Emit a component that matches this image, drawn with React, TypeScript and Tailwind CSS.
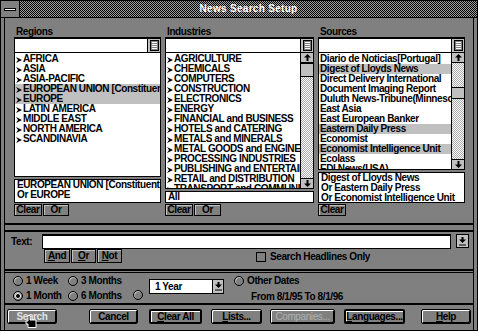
import React from "react";

const FONT = "font-['Liberation_Sans',Arial,sans-serif]";

const Bullet = () => (
  <svg width="6" height="6" viewBox="0 0 6 6" className="shrink-0 mr-[1px] mt-[3px]">
    <path d="M0 0 L6 3 L0 6 L2 3 Z" fill="#000" />
  </svg>
);

const ListIcon = () => (
  <div className="w-[13px] h-full bg-[#c0c0c0] border-l border-black flex items-center justify-center">
    <svg width="9" height="11" viewBox="0 0 9 11">
      <rect x="0.5" y="0.5" width="8" height="10" fill="#808080" stroke="#000" />
      <path d="M2 2.5 H7 M2 4.5 H7 M2 6.5 H7 M2 8.5 H7" stroke="#fff" strokeWidth="1" />
    </svg>
  </div>
);

const ArrowBtn = ({ dir }: { dir: "up" | "down" }) => (
  <div
    className={
      "h-[10px] shrink-0 bg-[#c0c0c0] border-black flex items-center justify-center " +
      (dir === "up" ? "border-b" : "border-t")
    }
  >
    <svg width="7" height="7" viewBox="0 0 7 7">
      {dir === "up" ? (
        <path d="M3.5 0 L7 3.5 H4.5 V7 H2.5 V3.5 H0 Z" fill="#000" />
      ) : (
        <path d="M3.5 7 L7 3.5 H4.5 V0 H2.5 V3.5 H0 Z" fill="#000" />
      )}
    </svg>
  </div>
);

const DITHER = "bg-[repeating-conic-gradient(#a8a8a8_0_25%,#ffffff_0_50%)] bg-[length:2px_2px]";

const Scrollbar = ({ before, thumb }: { before: number; thumb: number }) => (
  <div className="w-[13px] border-l border-black flex flex-col bg-white shrink-0">
    <ArrowBtn dir="up" />
    <div style={{ height: before }} className={"shrink-0 " + DITHER} />
    <div style={{ height: thumb }} className="shrink-0 bg-[#c0c0c0] border-y border-black" />
    <div className={"flex-1 " + DITHER} />
    <ArrowBtn dir="down" />
  </div>
);

type Item = { t: string; hl?: boolean };

const ListBox = ({
  items,
  bullets,
  scroll,
}: {
  items: Item[];
  bullets?: boolean;
  scroll?: { before: number; thumb: number };
}) => (
  <div className="flex-1 flex border border-t-0 border-black bg-white min-h-0 overflow-hidden">
    <div className="flex-1 min-w-0 overflow-hidden pt-[1px]">
      {items.map((it, i) => (
        <div
          key={i}
          className={
            "h-[10px] flex items-start whitespace-nowrap leading-[10px] pl-[1px] " +
            (it.hl ? "bg-[#c0c0c0]" : "")
          }
        >
          {bullets && <Bullet />}
          <span>{it.t}</span>
        </div>
      ))}
    </div>
    {scroll && <Scrollbar before={scroll.before} thumb={scroll.thumb} />}
  </div>
);

const SmallBtn = ({ label, w }: { label: string; w: number }) => (
  <div
    style={{ width: w }}
    className="h-[12px] border border-black bg-[#808080] shadow-[inset_1px_1px_0_#c0c0c0] flex items-center justify-center leading-[10px]"
  >
    {label}
  </div>
);

const Column = ({
  label,
  width,
  items,
  bullets,
  scroll,
  sel,
  selH,
  buttons,
}: {
  label: string;
  width: number;
  items: Item[];
  bullets?: boolean;
  scroll?: { before: number; thumb: number };
  sel: string[];
  selH: number;
  buttons: { label: string; w: number }[];
}) => (
  <div style={{ width }} className="flex flex-col h-full">
    <div className="h-[10px] leading-[10px] pl-[2px]">{label}</div>
    <div className="h-[16px] shrink-0 border border-black border-t-2 bg-white flex justify-end">
      <ListIcon />
    </div>
    <ListBox items={items} bullets={bullets} scroll={scroll} />
    <div style={{ height: selH }} className="shrink-0 mt-[2px] border border-black bg-white pl-[2px] overflow-hidden">
      {sel.map((s, i) => (
        <div key={i} className="h-[10px] leading-[10px] whitespace-nowrap">
          {s}
        </div>
      ))}
    </div>
    <div className="mt-[1px] flex gap-[1px] shrink-0">
      {buttons.map((b) => (
        <SmallBtn key={b.label} label={b.label} w={b.w} />
      ))}
    </div>
  </div>
);

const Radio = ({ on }: { on?: boolean }) => (
  <div className="w-[10px] h-[10px] rounded-full border border-black bg-[#808080] shadow-[inset_1px_1px_0_#c0c0c0] flex items-center justify-center shrink-0">
    {on && <div className="w-[6px] h-[6px] rounded-full bg-black border border-white" />}
  </div>
);

const DownGlyph = () => (
  <svg width="7" height="9" viewBox="0 0 7 9">
    <path d="M3.5 6 L7 2.5 H4.5 V0 H2.5 V2.5 H0 Z" fill="#000" />
    <path d="M0 8 H7" stroke="#000" />
  </svg>
);

const BigBtn = ({
  w,
  children,
  ml,
  thick,
}: {
  w: number;
  children: React.ReactNode;
  ml: number;
  thick?: boolean;
}) => (
  <div
    style={{ width: w, marginLeft: ml }}
    className={
      "h-[15px] shrink-0 rounded-[2px] border-black bg-[#808080] flex items-center justify-center leading-[10px] " +
      (thick
        ? "border-2 shadow-[inset_1px_1px_0_#ffffff]"
        : "border shadow-[inset_1px_1px_0_#ffffff,inset_-1px_-1px_0_#000]")
    }
  >
    {children}
  </div>
);

export default function App() {
  const regions: Item[] = [
    { t: "AFRICA" },
    { t: "ASIA" },
    { t: "ASIA-PACIFIC" },
    { t: "EUROPEAN UNION [Constituents]", hl: true },
    { t: "EUROPE", hl: true },
    { t: "LATIN AMERICA" },
    { t: "MIDDLE EAST" },
    { t: "NORTH AMERICA" },
    { t: "SCANDINAVIA" },
  ];
  const industries: Item[] = [
    { t: "AGRICULTURE" },
    { t: "CHEMICALS" },
    { t: "COMPUTERS" },
    { t: "CONSTRUCTION" },
    { t: "ELECTRONICS" },
    { t: "ENERGY" },
    { t: "FINANCIAL and BUSINESS" },
    { t: "HOTELS and CATERING" },
    { t: "METALS and MINERALS" },
    { t: "METAL GOODS and ENGINEERING" },
    { t: "PROCESSING INDUSTRIES" },
    { t: "PUBLISHING and ENTERTAINMENT" },
    { t: "RETAIL and DISTRIBUTION" },
    { t: "TRANSPORT and COMMUNICATIONS" },
  ];
  const sources: Item[] = [
    { t: "Diario de Noticias[Portugal]" },
    { t: "Digest of Lloyds News", hl: true },
    { t: "Direct Delivery International" },
    { t: "Document Imaging Report" },
    { t: "Duluth News-Tribune(Minnesota)" },
    { t: "East Asia" },
    { t: "East European Banker" },
    { t: "Eastern Daily Press", hl: true },
    { t: "Economist" },
    { t: "Economist Intelligence Unit", hl: true },
    { t: "Ecolass" },
    { t: "EDI News(USA)" },
  ];

  return (
    <div
      className={
        "w-[478px] h-[331px] bg-[#808080] border border-black flex flex-col overflow-hidden text-black text-[10px] tracking-[-0.4px] font-bold " +
        FONT
      }
    >
      {/* Title bar */}
      <div className="h-[17px] flex border-b border-black shrink-0">
        <div className="w-[19px] border-r border-black bg-[#808080] flex items-center justify-center">
          <div className="w-[12px] h-[3px] bg-white border border-black" />
        </div>
        <div className="flex-1 bg-[repeating-conic-gradient(#000_0_25%,#a0a0a0_0_50%)] bg-[length:2px_2px] flex items-center justify-center">
          <span className="text-white leading-[10px] tracking-[0.3px]">News Search Setup</span>
        </div>
      </div>

      {/* Body with inner frame */}
      <div className="flex-1 flex flex-col border-x-[3px] border-[#808080]">
        <div className="flex-1 flex flex-col border-x border-black">
          {/* Lists section */}
          <div className="h-[207px] shrink-0 flex gap-[4px] pl-[9px] pt-[9px] pb-[7px] border-b-2 border-black">
            <Column
              label="Regions"
              width={147}
              items={regions}
              bullets
              sel={["EUROPEAN UNION [Constituents]", "Or EUROPE"]}
              selH={24}
              buttons={[
                { label: "Clear", w: 28 },
                { label: "Or", w: 26 },
              ]}
            />
            <Column
              label="Industries"
              width={149}
              items={industries}
              bullets
              scroll={{ before: 0, thumb: 14 }}
              sel={["All"]}
              selH={12}
              buttons={[
                { label: "Clear", w: 28 },
                { label: "Or", w: 27 },
              ]}
            />
            <Column
              label="Sources"
              width={147}
              items={sources}
              scroll={{ before: 24, thumb: 12 }}
              sel={["Digest of Lloyds News", "Or Eastern Daily Press", "Or Economist Intelligence Unit"]}
              selH={31}
              buttons={[{ label: "Clear", w: 28 }]}
            />
          </div>

          {/* Text section */}
          <div className="h-[41px] shrink-0 mt-[5px] border-y-2 border-black flex flex-col pl-[6px] pt-[2px]">
            <div className="flex items-start h-[15px] shrink-0">
              <div className="w-[31px] leading-[10px] pt-[3px]">Text:</div>
              <div className="w-[409px] h-[15px] border border-black border-t-2 bg-white" />
              <div className="ml-[5px] w-[13px] h-[14px] border border-black bg-[#c0c0c0] flex items-center justify-center">
                <DownGlyph />
              </div>
            </div>
            <div className="flex items-start">
              <div className="ml-[33px] flex gap-[1px]">
                <div className="w-[26px] h-[14px] border border-black shadow-[inset_1px_1px_0_#c0c0c0] flex items-center justify-center leading-[10px]">
                  <span className="underline">A</span>nd
                </div>
                <div className="w-[25px] h-[14px] border border-black shadow-[inset_1px_1px_0_#c0c0c0] flex items-center justify-center leading-[10px]">
                  <span className="underline">O</span>r
                </div>
                <div className="w-[25px] h-[14px] border border-black shadow-[inset_1px_1px_0_#c0c0c0] flex items-center justify-center leading-[10px]">
                  <span className="underline">N</span>ot
                </div>
              </div>
              <div className="ml-[134px] mt-[3px] flex items-center gap-[4px]">
                <div className="w-[10px] h-[10px] border border-black" />
                <span className="leading-[10px]">Search Headlines Only</span>
              </div>
            </div>
          </div>

          {/* Date section */}
          <div className="h-[33px] shrink-0 mt-[1px] border-t border-b-2 border-black flex pl-[8px] pt-[3px]">
            <div className="w-[55px] flex flex-col gap-[5px]">
              <div className="flex items-center gap-[3px] leading-[10px]">
                <Radio /> 1 Week
              </div>
              <div className="flex items-center gap-[3px] leading-[10px]">
                <Radio on /> 1 Month
              </div>
            </div>
            <div className="w-[65px] flex flex-col gap-[5px]">
              <div className="flex items-center gap-[3px] leading-[10px]">
                <Radio /> 3 Months
              </div>
              <div className="flex items-center gap-[3px] leading-[10px]">
                <Radio /> 6 Months
              </div>
            </div>
            <div className="flex items-start">
              <div className="mt-[14px]">
                <Radio />
              </div>
              <div className="ml-[6px] mt-[3px] w-[75px] h-[15px] border border-black bg-white flex">
                <div className="flex-1 pl-[5px] leading-[12px] pt-[1px]">1 Year</div>
                <div className="w-[11px] h-full bg-[#c0c0c0] border-l border-black flex items-center justify-center">
                  <DownGlyph />
                </div>
              </div>
            </div>
            <div className="ml-[10px] flex flex-col">
              <div className="flex items-center gap-[3px] leading-[10px]">
                <Radio /> Other Dates
              </div>
              <div className="ml-[17px] mt-[6px] leading-[10px]">From 8/1/95 To 8/1/96</div>
            </div>
          </div>

          {/* Buttons */}
          <div className="flex-1 flex items-start pt-[4px] relative">
            <BigBtn w={50} ml={2}>
              <span className="text-[#e0e0e0]">Search</span>
            </BigBtn>
            <BigBtn w={49} ml={32}>
              Cancel
            </BigBtn>
            <BigBtn w={53} ml={11} thick>
              <span>
                <span className="underline">C</span>lear All
              </span>
            </BigBtn>
            <BigBtn w={51} ml={9}>
              <span>
                <span className="underline">L</span>ists...
              </span>
            </BigBtn>
            <BigBtn w={65} ml={8}>
              <span className="text-[#b0b0b0] font-normal">Companies...</span>
            </BigBtn>
            <BigBtn w={61} ml={9} thick>
              <span>
                <span className="underline">L</span>anguages...
              </span>
            </BigBtn>
            <BigBtn w={50} ml={16}>
              <span>
                <span className="underline">H</span>elp
              </span>
            </BigBtn>
            <svg width="12" height="13" viewBox="0 0 12 13" className="absolute left-[20px] top-[10px]">
              <path d="M3 0.5 H5 V5 H11 V12.5 H3 V9 H1 V6 H3 Z" fill="#000" stroke="#fff" strokeWidth="1" />
            </svg>
          </div>
        </div>
      </div>
    </div>
  );
}
